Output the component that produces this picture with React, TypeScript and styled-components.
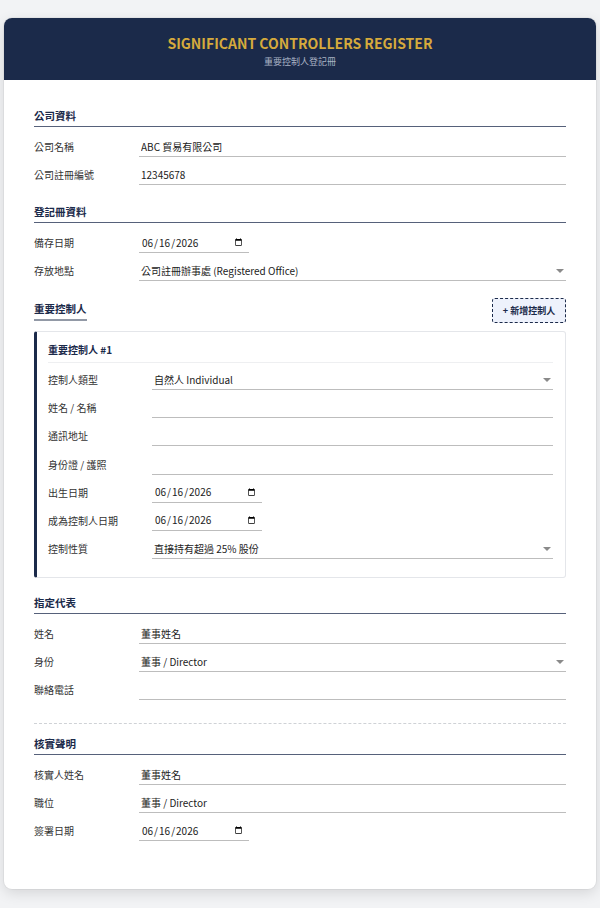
import React from "react";
import styled, { createGlobalStyle } from "styled-components";

const Global = createGlobalStyle`
  html, body { margin: 0; padding: 0; background: #f2f3f5; }
  body { font-family: "Noto Sans CJK TC", "Noto Sans", sans-serif; color: #222; }
  * { box-sizing: border-box; }
`;

const Page = styled.div`
  padding: 18px 4px 20px;
`;

const Sheet = styled.div`
  background: #fff;
  border-radius: 8px;
  overflow: hidden;
  box-shadow: 0 4px 14px rgba(0, 0, 0, 0.12), 0 0 0 1px rgba(0, 0, 0, 0.04);
`;

const Header = styled.header`
  background: #1b2a4a;
  padding: 15px 0 12px;
  text-align: center;
`;

const Title = styled.h1`
  margin: 0;
  font-size: 14px;
  line-height: 20px;
  font-weight: 700;
  letter-spacing: 0;
  color: #d6aa3c;
`;

const Subtitle = styled.div`
  margin-top: 2px;
  font-size: 9px;
  line-height: 13px;
  color: #a9b2c4;
`;

const Body = styled.div`
  padding: 28px 30px 48px;
`;

const Section = styled.section<{ $top?: number }>`
  margin-top: ${(p) => p.$top ?? 0}px;
`;

const Heading = styled.h2`
  margin: 0 0 10px;
  padding-bottom: 2px;
  font-size: 10.5px;
  line-height: 16px;
  font-weight: 700;
  color: #1b2a4a;
  border-bottom: 1.5px solid #56617a;
`;

const HeadRow = styled.div`
  display: flex;
  justify-content: space-between;
  align-items: center;
  margin-bottom: 8px;
`;

const InlineHeading = styled.h2`
  margin: 0;
  padding-bottom: 2px;
  font-size: 10.5px;
  line-height: 16px;
  font-weight: 700;
  color: #1b2a4a;
  border-bottom: 2px solid #9299a6;
`;

const AddButton = styled.button`
  height: 25px;
  width: 74px;
  padding: 0;
  border: 1px dashed #1b2a4a;
  border-radius: 3px;
  background: #eef2fc;
  color: #1b2a4a;
  font-family: inherit;
  font-size: 9px;
  font-weight: 700;
`;

const Rows = styled.div<{ $gap?: number }>`
  display: flex;
  flex-direction: column;
  gap: ${(p) => p.$gap ?? 8}px;
`;

const Row = styled.div<{ $label: number }>`
  display: grid;
  grid-template-columns: ${(p) => p.$label}px 1fr;
  grid-template-rows: 20px;
  align-items: center;
  height: 20px;
`;

const Label = styled.label`
  font-size: 10px;
  line-height: 14px;
  color: #333;
  white-space: nowrap;
`;

const fieldBase = `
  display: block;
  font-family: "Noto Sans CJK TC", "Noto Sans", sans-serif;
  font-size: 10px;
  line-height: 14px;
  color: #222;
  height: 20px;
  margin: 0;
  border: none;
  border-bottom: 1px solid #bdbdbd;
  background: transparent;
  padding: 0 2px;
  outline: none;
`;

const TextInput = styled.input`
  ${fieldBase}
  width: 100%;
`;

const DateBox = styled.div`
  display: flex;
  height: 20px;
`;

const DateInput = styled.input`
  ${fieldBase}
  width: 110px;
  padding: 0 6px 0 2px;
  &::-webkit-datetime-edit { padding: 0; }
  &::-webkit-datetime-edit-fields-wrapper { padding: 0; }
  &::-webkit-calendar-picker-indicator { width: 9px; height: 9px; margin-left: 0; padding: 0; }
`;

const SelectWrap = styled.div`
  position: relative;
  display: flex;
  height: 20px;
  width: 100%;
  &::after {
    content: "";
    position: absolute;
    right: 2px;
    top: 8px;
    border-left: 4px solid transparent;
    border-right: 4px solid transparent;
    border-top: 4px solid #8a8a8a;
    pointer-events: none;
  }
`;

const Select = styled.select`
  ${fieldBase}
  width: 100%;
  appearance: none;
  -webkit-appearance: none;
  border-radius: 0;
`;

const Card = styled.div`
  border: 1px solid #e4e6ea;
  border-left: 3px solid #1b2a4a;
  border-radius: 3px;
  padding: 11px 12px 18px 11px;
`;

const CardTitle = styled.div`
  font-size: 10px;
  line-height: 14px;
  font-weight: 700;
  color: #1b2a4a;
  padding-bottom: 5px;
  border-bottom: 1px solid #eeeff1;
  margin-bottom: 7px;
`;

const Divider = styled.hr`
  margin: 23px 0 12px;
  border: none;
  border-top: 1px dashed #cfd2d6;
`;

type Field =
  | { label: string; kind: "text"; value?: string }
  | { label: string; kind: "date" }
  | { label: string; kind: "select"; value: string };

const FieldRow: React.FC<{ f: Field; labelW: number }> = ({ f, labelW }) => (
  <Row $label={labelW}>
    <Label>{f.label}</Label>
    {f.kind === "text" && <TextInput type="text" defaultValue={f.value ?? ""} />}
    {f.kind === "date" && (
      <DateBox>
        <DateInput type="date" defaultValue="2026-06-16" />
      </DateBox>
    )}
    {f.kind === "select" && (
      <SelectWrap>
        <Select defaultValue={f.value}>
          <option value={f.value}>{f.value}</option>
        </Select>
      </SelectWrap>
    )}
  </Row>
);

const company: Field[] = [
  { label: "公司名稱", kind: "text", value: "ABC 貿易有限公司" },
  { label: "公司註冊編號", kind: "text", value: "12345678" },
];

const register: Field[] = [
  { label: "備存日期", kind: "date" },
  { label: "存放地點", kind: "select", value: "公司註冊辦事處 (Registered Office)" },
];

const controller: Field[] = [
  { label: "控制人類型", kind: "select", value: "自然人 Individual" },
  { label: "姓名 / 名稱", kind: "text" },
  { label: "通訊地址", kind: "text" },
  { label: "身份證 / 護照", kind: "text" },
  { label: "出生日期", kind: "date" },
  { label: "成為控制人日期", kind: "date" },
  { label: "控制性質", kind: "select", value: "直接持有超過 25% 股份" },
];

const rep: Field[] = [
  { label: "姓名", kind: "text", value: "董事姓名" },
  { label: "身份", kind: "select", value: "董事 / Director" },
  { label: "聯絡電話", kind: "text" },
];

const verify: Field[] = [
  { label: "核實人姓名", kind: "text", value: "董事姓名" },
  { label: "職位", kind: "text", value: "董事 / Director" },
  { label: "簽署日期", kind: "date" },
];

const renderRows = (list: Field[], w: number, gap?: number) => (
  <Rows $gap={gap}>
    {list.map((f) => (
      <FieldRow key={f.label} f={f} labelW={w} />
    ))}
  </Rows>
);

export default function App() {
  return (
    <>
      <Global />
      <Page>
        <Sheet>
          <Header>
            <Title>SIGNIFICANT CONTROLLERS REGISTER</Title>
            <Subtitle>重要控制人登記冊</Subtitle>
          </Header>
          <Body>
            <Section>
              <Heading>公司資料</Heading>
              {renderRows(company, 105)}
            </Section>
            <Section $top={19}>
              <Heading>登記冊資料</Heading>
              {renderRows(register, 105)}
            </Section>
            <Section $top={17}>
              <HeadRow>
                <InlineHeading>重要控制人</InlineHeading>
                <AddButton type="button">+ 新增控制人</AddButton>
              </HeadRow>
              <Card>
                <CardTitle>重要控制人 #1</CardTitle>
                {renderRows(controller, 104, 8.2)}
              </Card>
            </Section>
            <Section $top={17}>
              <Heading>指定代表</Heading>
              {renderRows(rep, 105)}
            </Section>
            <Divider />
            <Section>
              <Heading>核實聲明</Heading>
              {renderRows(verify, 105)}
            </Section>
          </Body>
        </Sheet>
      </Page>
    </>
  );
}
